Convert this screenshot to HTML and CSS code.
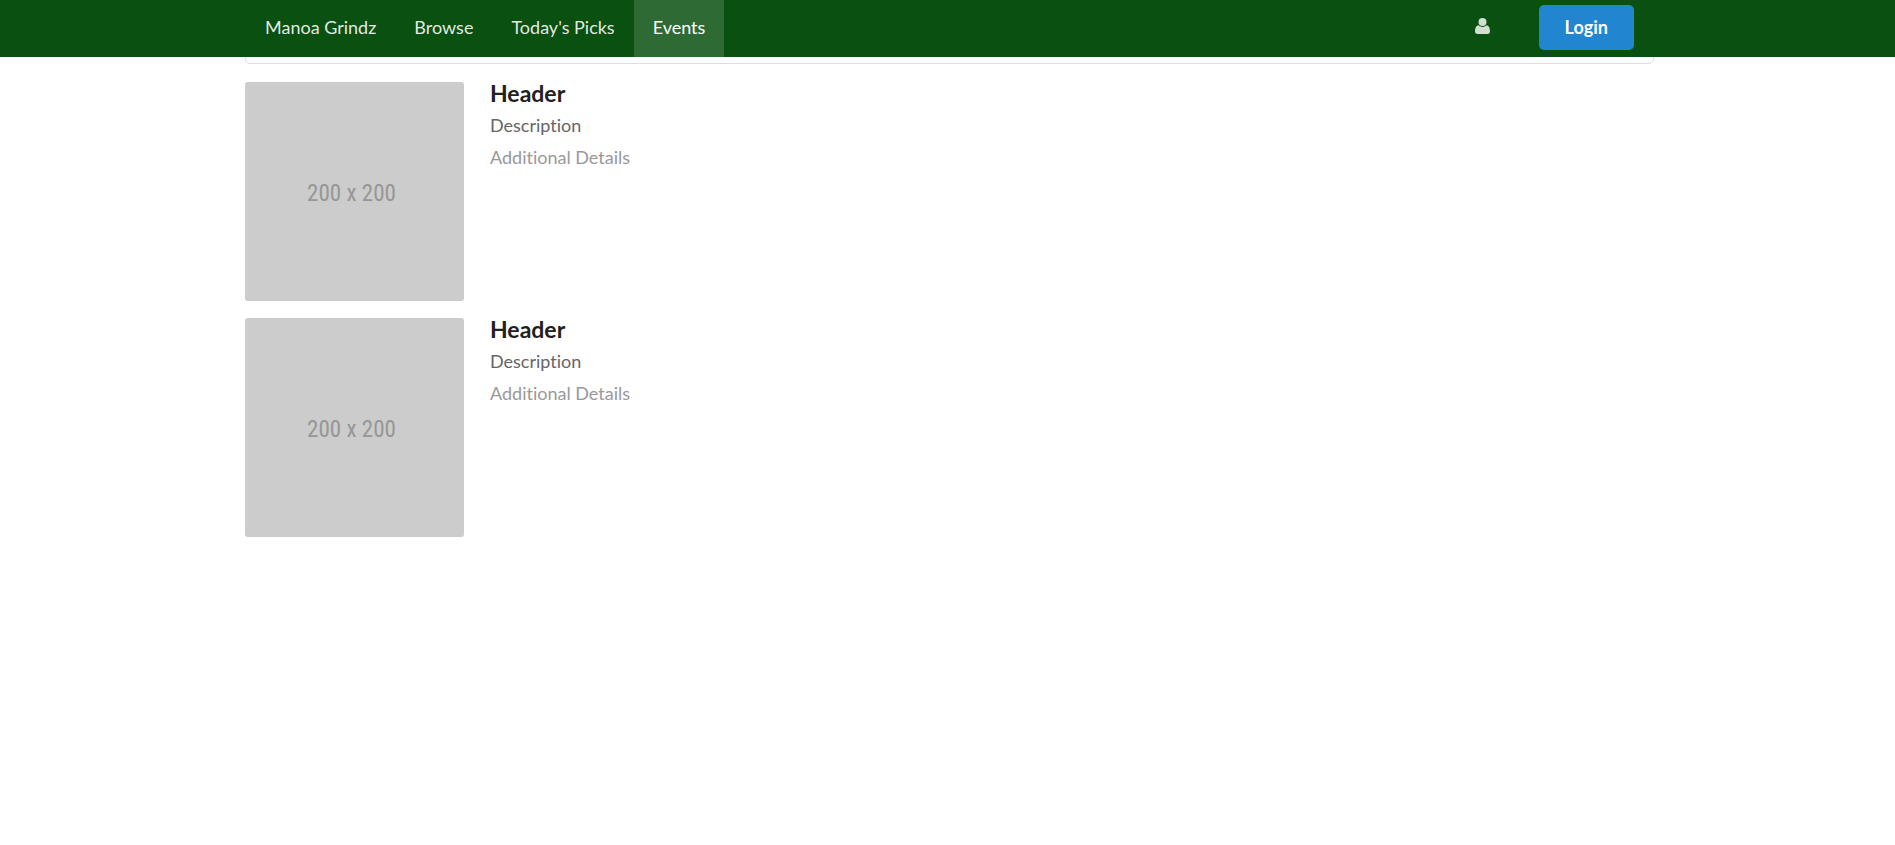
FILE: index.html
```html
<!DOCTYPE html>
<html lang="en">
<head>
<meta charset="utf-8">
<meta name="viewport" content="width=device-width, initial-scale=1">
<title>Manoa Grindz - Events</title>
<link rel="stylesheet" href="styles.css">
</head>
<body>
<header class="navbar">
  <nav class="container menu">
    <a class="item" href="#">Manoa Grindz</a>
    <a class="item" href="#">Browse</a>
    <a class="item" href="#">Today's Picks</a>
    <a class="item active" href="#">Events</a>
    <div class="right">
      <a class="item user" href="#" aria-label="Account">
        <svg class="icon" viewBox="0 0 15 16" aria-hidden="true"><circle cx="7.5" cy="4" r="4"/><path d="M3.6 7.2C1.2 7.4 0 9.8 0 13.2C0 15 1 16 2.7 16H12.3C14 16 15 15 15 13.2C15 9.8 13.8 7.4 11.4 7.2C10.3 8.3 9 8.9 7.5 8.9S4.7 8.3 3.6 7.2Z"/></svg>
      </a>
      <button class="login" type="button">Login</button>
    </div>
  </nav>
</header>
<main class="page">
  <div class="container">
    <div class="segment"></div>
    <div class="events">
      <article class="event">
        <div class="picture">200 x 200</div>
        <div class="content">
          <h2 class="title">Header</h2>
          <p class="description">Description</p>
          <p class="details">Additional Details</p>
        </div>
      </article>
      <article class="event">
        <div class="picture">200 x 200</div>
        <div class="content">
          <h2 class="title">Header</h2>
          <p class="description">Description</p>
          <p class="details">Additional Details</p>
        </div>
      </article>
    </div>
  </div>
</main>
</body>
</html>
```
FILE: styles.css
```css
* {
  box-sizing: border-box;
}

body {
  margin: 0;
  background: #fff;
  color: #212121;
  font-family: Lato, "Helvetica Neue", Arial, sans-serif;
  font-size: 18px;
  font-variant-ligatures: none;
  line-height: 26px;
}

.container {
  width: 100%;
  max-width: 1409px;
  margin: 0 auto;
}

.navbar,
.page {
  padding-left: 4px;
}

.navbar {
  background: #0a5010;
}

.menu {
  display: flex;
  min-height: 57px;
  padding-left: 1px;
}

.item {
  display: flex;
  align-items: center;
  padding: 0 19px 3px;
  color: rgba(255, 255, 255, 0.9);
  text-decoration: none;
}

.item.active {
  background: rgba(255, 255, 255, 0.15);
  color: #fff;
}

.right {
  display: flex;
  align-items: center;
  gap: 30px;
  margin-left: auto;
  padding: 0 20px 2px 0;
}

.icon {
  width: 15px;
  height: 16px;
  fill: rgba(255, 255, 255, 0.82);
}

.login {
  min-width: 95px;
  height: 45px;
  padding: 0 26px 2px;
  border: 0;
  border-radius: 5px;
  background: #2185d0;
  color: #fff;
  font: bold 18px/18px Lato, sans-serif;
}

.segment {
  height: 7px;
  border: 1px solid #dededf;
  border-top: 0;
  border-radius: 0 0 5px 5px;
}

.events {
  display: grid;
  gap: 17px;
  padding-top: 18px;
}

.event {
  display: flex;
  gap: 26px;
}

.picture {
  display: flex;
  flex: none;
  align-items: center;
  justify-content: center;
  width: 219px;
  height: 219px;
  padding: 4px 6px 0 0;
  border-radius: 3px;
  background: #ccc;
  color: #969696;
  font-family: "Roboto Condensed", "Liberation Sans Narrow", Roboto, sans-serif;
  font-size: 23px;
}

.title {
  margin: 0 0 8px;
  font-size: 23px;
  line-height: 22px;
}

.description,
.details {
  margin: 0 0 6px;
  color: #666;
}

.details {
  color: #999;
}
```
